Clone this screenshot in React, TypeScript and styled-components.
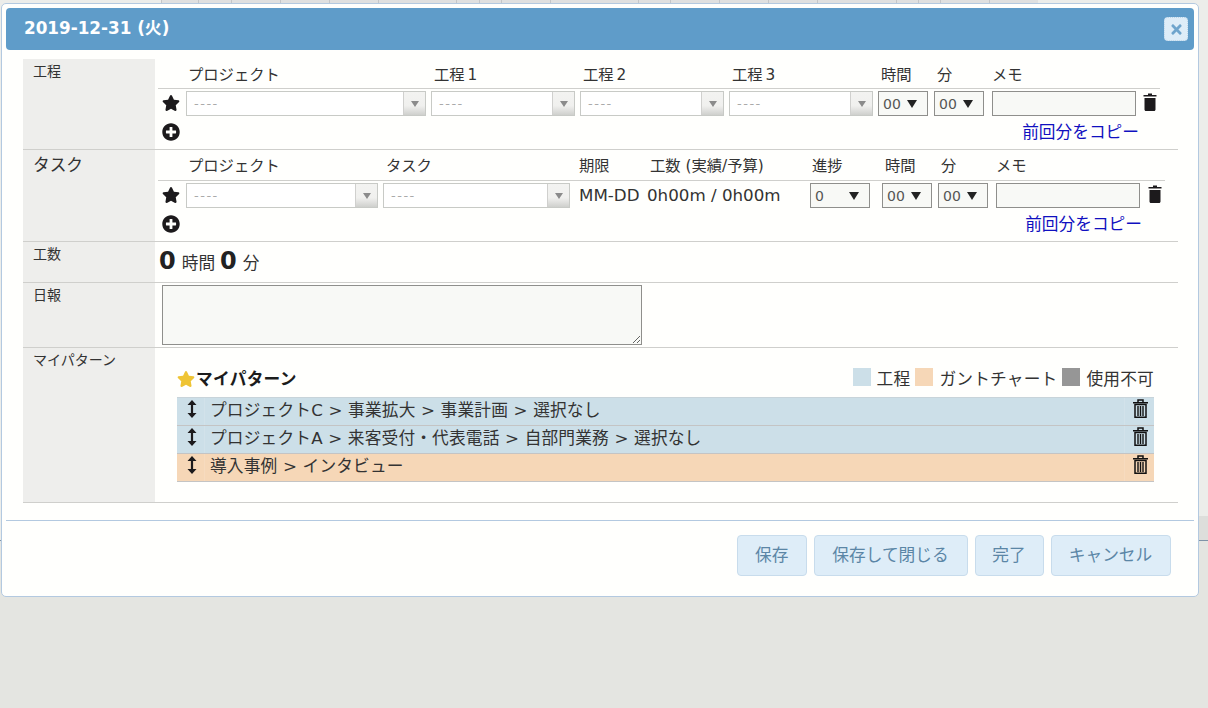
import React from 'react';
import styled, { createGlobalStyle } from 'styled-components';
import { FaStar, FaPlusCircle, FaTimes } from 'react-icons/fa';

const GlobalStyle = createGlobalStyle`
    html, body {
        margin: 0;
        padding: 0;
        height: 100%;
        overflow: hidden;
        background: #e4e5e1;
    }
    * {
        box-sizing: border-box;
    }
    body {
        font-family: "DejaVu Sans", "Noto Sans CJK JP", sans-serif;
        color: #222;
    }
`

const Page = styled.div`
    position: relative;
    width: 1208px;
    height: 708px;
`

const TopStrip = styled.div`
    height: 3px;
    display: flex;
    padding-left: 161px;
    background: #ecedea;
`

const StripCell = styled.div<{ $w: number }>`
    width: ${p => p.$w}px;
    border-left: 1px solid #c4c6c8;
    background: #dfe0e0;
`

const Behind = styled.div`
    height: 538px;
    background: #ecedea;
    border-bottom: 1px solid #7f93a8;
    display: flex;
    justify-content: flex-end;
    align-items: flex-end;
`

const BehindCell = styled.div`
    width: 12px;
    height: 24px;
    background: #dddedb;
`

const Modal = styled.div`
    position: absolute;
    left: 1px;
    top: 3px;
    width: 1198px;
    height: 594px;
    background: #fffffd;
    border: 1px solid #b3c9e0;
    border-radius: 5px;
    padding: 4px 5px 0 4px;
`

const Header = styled.div`
    height: 42px;
    width: 1188px;
    background: #5f9cc9;
    border-radius: 4px;
    display: flex;
    align-items: center;
    justify-content: space-between;
    padding: 0 6px 0 18px;
`

const Title = styled.div`
    color: #fff;
    font-size: 16.8px;
    font-weight: 700;
    margin-top: -4px;
`

const CloseButton = styled.button`
    width: 24px;
    height: 24px;
    padding: 0;
    background: #deedf8;
    border: 1px dotted #b9d4e8;
    border-radius: 4px;
    color: #6fa5cd;
    font-size: 15px;
    display: flex;
    align-items: center;
    justify-content: center;
`

const FormTable = styled.div`
    margin: 9px 0 0 17px;
    width: 1155px;
`

const FormRow = styled.div<{ $h: number }>`
    display: flex;
    height: ${p => p.$h}px;
    border-bottom: 1px solid #cfcfcc;
`

const RowLabel = styled.div<{ $big?: boolean }>`
    width: 132px;
    flex: none;
    background: #eeeeec;
    padding: ${p => (p.$big ? '6px' : '3px')} 0 0 10px;
    font-size: ${p => (p.$big ? 16.7 : 14)}px;
    line-height: 18px;
    color: #333;
`

const RowBody = styled.div`
    flex: 1;
    padding-left: 3px;
    min-width: 0;
`

const LineGrid = styled.div<{ $tracks: string; $head?: boolean; $h?: number; $pb?: number }>`
    display: grid;
    grid-template-columns: ${p => p.$tracks};
    align-items: ${p => (p.$head ? 'end' : 'center')};
    width: max-content;
    height: ${p => p.$h ?? 25}px;
    ${p => p.$head && `
        border-bottom: 1px solid #cfcfcc;
        margin-bottom: 2px;
        padding-bottom: ${p.$pb ?? 3}px;
    `}
`

const HeadCell = styled.div<{ $pad?: number }>`
    padding-left: ${p => p.$pad ?? 2}px;
    font-size: 15.3px;
    line-height: 20px;
    color: #333;
    white-space: nowrap;
`

const StepHead = styled(HeadCell)`
    word-spacing: -2px;
`

const ValueCell = styled.div`
    font-size: 16.7px;
    line-height: 25px;
    color: #333;
    white-space: nowrap;
`

const StarIcon = styled(FaStar)`
    font-size: 18px;
    margin: 0 0 2px 4px;
    color: #1c1a1c;
    display: block;
`

const PlusIcon = styled(FaPlusCircle)`
    font-size: 18px;
    margin-left: 4px;
    color: #1c1a1c;
    display: block;
`

const ComboBox = styled.div<{ $w: number }>`
    width: ${p => p.$w}px;
    height: 25px;
    display: flex;
    border: 1px solid #c8cac6;
    background: #fff;
`

const ComboText = styled.div`
    flex: 1;
    font-size: 13px;
    letter-spacing: 1.5px;
    line-height: 23px;
    padding-left: 7px;
    color: #aaa;
`

const ComboArrow = styled.div`
    width: 22px;
    background: linear-gradient(#f3f3f1, #f0f0ee 60%, #cfd0cd);
    border-left: 1px solid #d0d0ce;
    display: flex;
    align-items: center;
    justify-content: center;
    &::after {
        content: '';
        border-left: 4px solid transparent;
        border-right: 4px solid transparent;
        border-top: 6px solid #8b8b8b;
    }
`

const Select = styled.div<{ $w?: number }>`
    width: ${p => p.$w ?? 50}px;
    height: 25px;
    border: 1px solid #8f8f8c;
    background: #f8f9f6;
    display: flex;
    align-items: center;
    justify-content: space-between;
    padding: 0 10px 0 4px;
    font-size: 14px;
    color: #555;
    &::after {
        content: '';
        border-left: 5px solid transparent;
        border-right: 5px solid transparent;
        border-top: 8px solid #222;
    }
`

const Memo = styled.input`
    width: 144px;
    height: 25px;
    border: 1px solid #8f8f8c;
    background: #f8f9f6;
    padding: 0;
    display: block;
`

const BottomLine = styled.div<{ $width: number }>`
    display: flex;
    justify-content: space-between;
    align-items: center;
    width: ${p => p.$width}px;
    height: 27px;
    margin-top: 2px;
`

const CopyLink = styled.a`
    color: #1010c0;
    font-size: 16.7px;
    line-height: 24px;
    white-space: nowrap;
`

const TotalBody = styled.div`
    padding: 3px 0 0 4px;
    display: flex;
    align-items: baseline;
    font-size: 16.7px;
    color: #333;
`

const TotalNumber = styled.span`
    font-size: 24px;
    font-weight: 700;
    color: #222;
    line-height: 32px;
    margin-right: 6px;
`

const TotalUnit = styled.span`
    margin-right: 5px;
`

const ReportBox = styled.textarea`
    display: block;
    width: 480px;
    height: 60px;
    margin: 2px 0 0 7px;
    background: #f8f9f6;
    border: 1px solid #8f8f8c;
    padding: 0;
`

const PatternBody = styled.div`
    padding: 17px 24px 0 22px;
    flex: 1;
`

const PatternHead = styled.div`
    display: flex;
    justify-content: space-between;
    height: 32px;
`

const PatternTitle = styled.div`
    display: flex;
    align-items: center;
    font-size: 16.7px;
    letter-spacing: 0.3px;
    font-weight: 700;
    color: #1c1c1c;
    height: 25px;
`

const GoldStar = styled(FaStar)`
    color: #efc434;
    font-size: 18px;
    margin-top: 3px;
    margin-right: 1px;
`

const Legend = styled.div`
    display: flex;
    align-items: flex-start;
    margin-top: 3px;
    font-size: 16.7px;
    letter-spacing: 0.2px;
    line-height: 22px;
    color: #333;
`

const Swatch = styled.span<{ $color: string }>`
    width: 18px;
    height: 18px;
    background: ${p => p.$color};
    margin: 0 6px 0 5px;
`

const PatternList = styled.div`
    border-top: 1px solid #c8d4da;
`

const PatternRow = styled.div<{ $color: string }>`
    display: flex;
    height: 28px;
    background: ${p => p.$color};
    border-bottom: 1px solid #c4c4c4;
    font-size: 16.7px;
    letter-spacing: 0.17px;
    color: #333;
`

const HandleCell = styled.div`
    width: 28px;
    flex: none;
    border-right: 1px solid rgba(255, 255, 255, 0.12);
    padding: 2px 0 0 10px;
`

const PatternText = styled.div`
    flex: 1;
    padding-left: 5px;
    line-height: 24px;
    white-space: nowrap;
`

const TrashCell = styled.div`
    width: 30px;
    flex: none;
    border-left: 1px solid rgba(255, 255, 255, 0.12);
    padding: 1px 0 0 8px;
`

const Footer = styled.div`
    margin-top: 17px;
    border-top: 1px solid #b3c9e0;
    width: 1188px;
    display: flex;
    justify-content: flex-end;
    gap: 7px;
    padding: 14px 23.5px 0 0;
`

const FootButton = styled.button<{ $w: number }>`
    width: ${p => p.$w}px;
    height: 41px;
    background: #deedf8;
    border: 1px solid #c8dcec;
    border-radius: 4px;
    color: #5b86a6;
    font-family: inherit;
    font-size: 16.7px;
    padding: 0 0 4px;
`

const BlackTrashSvg = styled.svg`
    display: block;
    margin-bottom: 3px;
`

const PlainSvg = styled.svg`
    display: block;
`

function BlackTrash() {
    return (
        <BlackTrashSvg width="14" height="18" viewBox="0 0 14 18">
            <path d="M5 0.5h4v1.5h4.5v1.5H0.5V2H5z" fill="#1c1a1c" />
            <path d="M1.5 5h11v11.5c0 .8-.6 1.5-1.4 1.5H2.9c-.8 0-1.4-.7-1.4-1.5z" fill="#1c1a1c" />
        </BlackTrashSvg>
    )
}

function LineTrash() {
    return (
        <PlainSvg width="15" height="19" viewBox="0 0 15 19">
            <path d="M5 3V1h5v2M0 3.7h15" fill="none" stroke="#111" strokeWidth="1.5" />
            <path d="M2 5.5h11v12.7H2z" fill="none" stroke="#111" strokeWidth="1.5" />
            <path d="M5 7v10M7.5 7v10M10 7v10" stroke="#111" strokeWidth="1.4" />
        </PlainSvg>
    )
}

function MoveArrow() {
    return (
        <PlainSvg width="10" height="18" viewBox="0 0 10 18">
            <path d="M5 0L9.5 5h-3.4v8h3.4L5 18 .5 13h3.4V5H.5z" fill="#1c1a1c" />
        </PlainSvg>
    )
}

const stripCells = [37, 33, 49, 49, 49, 78, 23, 22, 49, 88, 32, 49, 49, 49, 79, 22, 22, 49, 49];

const koteiTracks = '28px 245px 149px 149px 149px 56px 58px 151px 17px';
const taskTracks = '28px 197px 196px 68px 163px 72px 56px 58px 152px 17px';

const patterns = [
    { color: '#ccdfe8', text: 'プロジェクトC > 事業拡大 > 事業計画 > 選択なし' },
    { color: '#ccdfe8', text: 'プロジェクトA > 来客受付・代表電話 > 自部門業務 > 選択なし' },
    { color: '#f6d7b7', text: '導入事例 > インタビュー' },
];

function Combo(props: { w: number }) {
    return (
        <ComboBox $w={props.w}>
            <ComboText>----</ComboText>
            <ComboArrow />
        </ComboBox>
    )
}

function App() {
    return (
        <Page>
            <GlobalStyle />
            <TopStrip>
                {stripCells.map((w, i) => <StripCell key={i} $w={w} />)}
            </TopStrip>
            <Behind>
                <BehindCell />
            </Behind>
            <Modal>
                <Header>
                    <Title>2019-12-31 (火)</Title>
                    <CloseButton><FaTimes /></CloseButton>
                </Header>
                <FormTable>
                    <FormRow $h={91}>
                        <RowLabel>工程</RowLabel>
                        <RowBody>
                            <LineGrid $tracks={koteiTracks} $head $h={30}>
                                <span />
                                <HeadCell>プロジェクト</HeadCell>
                                <StepHead $pad={3}>工程 1</StepHead>
                                <StepHead $pad={3}>工程 2</StepHead>
                                <StepHead $pad={3}>工程 3</StepHead>
                                <HeadCell $pad={3}>時間</HeadCell>
                                <HeadCell $pad={3}>分</HeadCell>
                                <HeadCell $pad={0}>メモ</HeadCell>
                                <span />
                            </LineGrid>
                            <LineGrid $tracks={koteiTracks}>
                                <StarIcon />
                                <Combo w={240} />
                                <Combo w={144} />
                                <Combo w={144} />
                                <Combo w={144} />
                                <Select>00</Select>
                                <Select>00</Select>
                                <Memo />
                                <BlackTrash />
                            </LineGrid>
                            <BottomLine $width={981}>
                                <PlusIcon />
                                <CopyLink>前回分をコピー</CopyLink>
                            </BottomLine>
                        </RowBody>
                    </FormRow>
                    <FormRow $h={92}>
                        <RowLabel $big>タスク</RowLabel>
                        <RowBody>
                            <LineGrid $tracks={taskTracks} $head $h={31} $pb={4}>
                                <span />
                                <HeadCell>プロジェクト</HeadCell>
                                <HeadCell $pad={3}>タスク</HeadCell>
                                <HeadCell $pad={0}>期限</HeadCell>
                                <HeadCell $pad={3}>工数 (実績/予算)</HeadCell>
                                <HeadCell>進捗</HeadCell>
                                <HeadCell $pad={3}>時間</HeadCell>
                                <HeadCell $pad={3}>分</HeadCell>
                                <HeadCell $pad={0}>メモ</HeadCell>
                                <span />
                            </LineGrid>
                            <LineGrid $tracks={taskTracks}>
                                <StarIcon />
                                <Combo w={192} />
                                <Combo w={187} />
                                <ValueCell>MM-DD</ValueCell>
                                <ValueCell>0h00m / 0h00m</ValueCell>
                                <Select $w={60}>0</Select>
                                <Select>00</Select>
                                <Select>00</Select>
                                <Memo />
                                <BlackTrash />
                            </LineGrid>
                            <BottomLine $width={984}>
                                <PlusIcon />
                                <CopyLink>前回分をコピー</CopyLink>
                            </BottomLine>
                        </RowBody>
                    </FormRow>
                    <FormRow $h={41}>
                        <RowLabel>工数</RowLabel>
                        <TotalBody>
                            <TotalNumber>0</TotalNumber>
                            <TotalUnit>時間</TotalUnit>
                            <TotalNumber>0</TotalNumber>
                            <TotalUnit>分</TotalUnit>
                        </TotalBody>
                    </FormRow>
                    <FormRow $h={65}>
                        <RowLabel>日報</RowLabel>
                        <ReportBox />
                    </FormRow>
                    <FormRow $h={155}>
                        <RowLabel>マイパターン</RowLabel>
                        <PatternBody>
                            <PatternHead>
                                <PatternTitle>
                                    <GoldStar />
                                    マイパターン
                                </PatternTitle>
                                <Legend>
                                    <Swatch $color="#ccdfe8" />工程
                                    <Swatch $color="#f6d7b7" />ガントチャート
                                    <Swatch $color="#969696" />使用不可
                                </Legend>
                            </PatternHead>
                            <PatternList>
                                {patterns.map((row, i) => (
                                    <PatternRow key={i} $color={row.color}>
                                        <HandleCell><MoveArrow /></HandleCell>
                                        <PatternText>{row.text}</PatternText>
                                        <TrashCell><LineTrash /></TrashCell>
                                    </PatternRow>
                                ))}
                            </PatternList>
                        </PatternBody>
                    </FormRow>
                </FormTable>
                <Footer>
                    <FootButton $w={69.5}>保存</FootButton>
                    <FootButton $w={154}>保存して閉じる</FootButton>
                    <FootButton $w={69}>完了</FootButton>
                    <FootButton $w={120}>キャンセル</FootButton>
                </Footer>
            </Modal>
        </Page>
    )
}

export default App;
